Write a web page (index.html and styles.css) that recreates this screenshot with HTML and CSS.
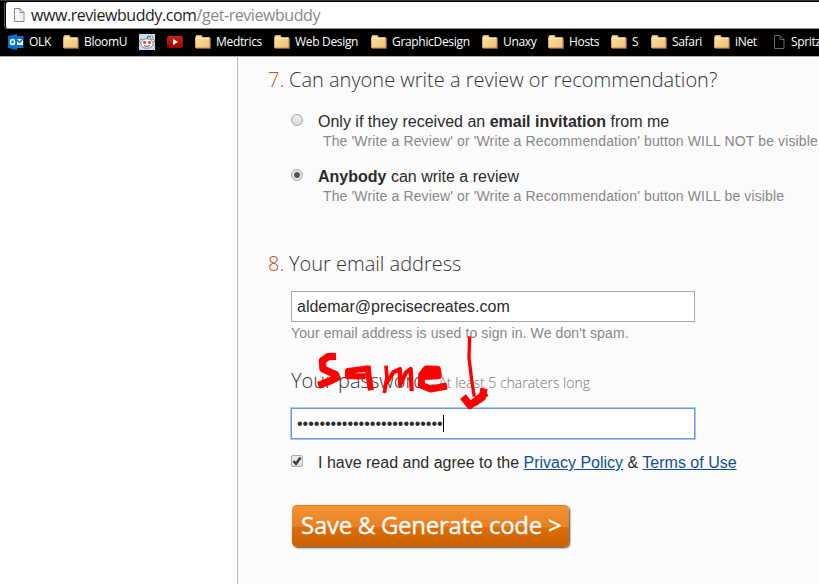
FILE: index.html
```html
<!DOCTYPE html>
<html lang="en">
<head>
<meta charset="utf-8">
<title>Get ReviewBuddy</title>
<link rel="stylesheet" href="styles.css">
</head>
<body>
<svg class="defs" width="0" height="0" aria-hidden="true">
  <defs>
    <linearGradient id="fold" x1="0" y1="0" x2="1" y2="1"><stop offset="0" stop-color="#ffe3a8"/><stop offset="1" stop-color="#f2bd72"/></linearGradient>
    <linearGradient id="tube" x1="0" y1="0" x2="0" y2="1"><stop offset="0" stop-color="#c9211e"/><stop offset="1" stop-color="#990000"/></linearGradient>
    <symbol id="folder" viewBox="0 0 16 16"><path d="M1 14.500h14.500V4" fill="none" stroke="#735b3d"/><path d="M.5 3.500 1.500 1.500h5l1 2h7v10H.5z" fill="url(#fold)" stroke="#d6aa6b"/><path d="M1.500 4.500h12.500" stroke="#fff0c8"/></symbol>
    <symbol id="page" viewBox="0 0 12 16"><path d="M1.500 1.500h5.500l4 4v9h-9.500zM7 1.500v4h4" stroke-width="1"/></symbol>
  </defs>
</svg>
<header class="browser">
  <div class="address">
    <svg class="page-icon" width="12" height="16"><use href="#page"/></svg>
    <span class="url">www.reviewbuddy.com<span class="path">/get-reviewbuddy</span></span>
  </div>
  <nav class="bookmarks">
    <a><svg width="16" height="16"><path d="M6 2h9.500v12H6z" fill="#0873c4"/><path d="M8 5h7v6H8z" fill="#fff"/><path d="m8 5 3.500 3.500L15 5" fill="none" stroke="#0873c4" stroke-width="1.500"/><path d="M0 2 9 0v16L0 14z" fill="#0873c4"/><ellipse cx="4.500" cy="8" rx="2" ry="2.500" fill="none" stroke="#fff" stroke-width="1.500"/></svg><span>OLK</span></a>
    <a><svg width="16" height="16"><use href="#folder"/></svg><span>BloomU</span></a>
    <a><svg width="16" height="16"><path d="M0 0h16v16H0z" fill="#c5ddf7"/><path d="m8 5 1-3 3 1" fill="none" stroke="#555"/><circle cx="12.500" cy="3" r="1.300" fill="#fff" stroke="#666" stroke-width=".7"/><circle cx="2.300" cy="7" r="1.700" fill="#fff" stroke="#666" stroke-width=".7"/><circle cx="13.700" cy="7" r="1.700" fill="#fff" stroke="#666" stroke-width=".7"/><ellipse cx="8" cy="9.500" rx="6.200" ry="4.700" fill="#fff" stroke="#666" stroke-width=".8"/><circle cx="5.500" cy="8.500" r="1.400" fill="#f03010"/><circle cx="10.500" cy="8.500" r="1.400" fill="#f03010"/><path d="M5 11.500q3 2 6 0" fill="none" stroke="#555"/></svg></a>
    <a><svg width="16" height="16"><rect y="2" width="16" height="12" rx="2" fill="url(#tube)"/><path d="m6 5 5 3-5 3z" fill="#fff"/></svg></a>
    <a><svg width="16" height="16"><use href="#folder"/></svg><span>Medtrics</span></a>
    <a><svg width="16" height="16"><use href="#folder"/></svg><span>Web Design</span></a>
    <a><svg width="16" height="16"><use href="#folder"/></svg><span>GraphicDesign</span></a>
    <a><svg width="16" height="16"><use href="#folder"/></svg><span>Unaxy</span></a>
    <a><svg width="16" height="16"><use href="#folder"/></svg><span>Hosts</span></a>
    <a><svg width="16" height="16"><use href="#folder"/></svg><span>S</span></a>
    <a><svg width="16" height="16"><use href="#folder"/></svg><span>Safari</span></a>
    <a><svg width="16" height="16"><use href="#folder"/></svg><span>iNet</span></a>
    <a><svg class="dark-page" width="12" height="16"><use href="#page"/></svg><span>Spritz</span></a>
  </nav>
</header>
<main class="content">
  <section class="access">
    <h2><span class="num">7.</span><span>Can anyone write a review or recommendation?</span></h2>
    <div class="option">
      <i class="radio"></i>
      <div><p class="choice">Only if they received an <b>email invitation</b> from me</p><p class="hint">The 'Write a Review' or 'Write a Recommendation' button WILL NOT be visible</p></div>
    </div>
    <div class="option">
      <i class="radio on"></i>
      <div><p class="choice"><b>Anybody</b> can write a review</p><p class="hint">The 'Write a Review' or 'Write a Recommendation' button WILL be visible</p></div>
    </div>
  </section>
  <section class="account">
    <h2><span class="num">8.</span><span>Your email address</span></h2>
    <div class="fields">
      <div class="field">aldemar@precisecreates.com</div>
      <p class="hint note">Your email address is used to sign in. We don't spam.</p>
      <p class="password-label">Your password <small>- At least 5 charaters long</small></p>
      <div class="field focused"><span>••••••••••••••••••••••••••</span><i class="caret"></i></div>
      <div class="agree">
        <i class="check"><svg width="12" height="12"><path d="m2.500 6 2.500 2.800L9.500 2.500" fill="none" stroke="#3b3b3b" stroke-width="2.400"/></svg></i>
        <span>I have read and agree to the <a>Privacy Policy</a> &amp; <a>Terms of Use</a></span>
      </div>
      <button class="save"><span>Save &amp; Generate code &gt;</span></button>
    </div>
  </section>
</main>
<svg class="scribble" width="220" height="120" viewBox="0 0 660 360" aria-hidden="true">
  <g fill="none" stroke="red" stroke-width="22" stroke-linejoin="round">
    <path d="M168 94 144 95 127 107 129 132 167 149 170 158 150 168 115 181"/>
    <path d="M266 130 204 138 204 154 256 154M263 122 266 155 273 196" stroke-width="18"/>
    <path d="M318 122 321 159 313 204" stroke-width="11"/>
    <path d="M318 176 340 142 360 133 360 180 378 143 392 132 395 198" stroke-width="13"/>
    <path d="M422 155 475 152 472 133 439 132 425 150 424 181 452 192 501 183" stroke-width="21"/>
    <path d="M569 34 567 98 575 165 583 215" stroke-width="10"/>
    <path d="M549 215 570 241 619 203" stroke-width="22"/>
    <path d="M612 190 607 217 579 236" stroke-width="22"/>
  </g>
</svg>
</body>
</html>
```
FILE: styles.css
```css
* { box-sizing: border-box; }
body { margin: 0; width: 819px; height: 584px; overflow: hidden; position: relative; background: #fff; color: #2b2b2b; font-family: "Liberation Sans", Arial, sans-serif; }
p, h2 { margin: 0; white-space: nowrap; }
.defs { position: absolute; }

.browser { height: 57px; background: #000; border-top: 1px solid #333; border-bottom: 1px solid #aaa; overflow: hidden; }
.address { height: 28px; margin: 0 0 0 5px; padding: 0 0 1px 7px; display: flex; align-items: center; background: #fff; border: 1px solid #000; border-bottom: 1px solid #888; border-right: 0; border-radius: 3px 0 0 3px; box-shadow: -1px 0 #555; }
.page-icon { margin-right: 6px; fill: #f5f5f5; stroke: #888; }
.url { font: 16px/24px "Open Sans", sans-serif; letter-spacing: -.44px; color: #222; white-space: nowrap; }
.path { color: #888; }
.bookmarks { height: 26px; padding-left: 8px; display: grid; grid-template-columns: 55px 76px 28px 28px 79px 97px 111px 66px 63px 40px 63px 59px 50px; align-items: center; color: #fff; font: 12px/16px "Open Sans", sans-serif; letter-spacing: -.32px; }
.bookmarks a { display: flex; gap: 5px; white-space: nowrap; }
.bookmarks svg { flex: none; }
.dark-page { fill: none; stroke: #666; margin-right: 1px; }

.content { margin-left: 237px; height: 527px; padding: 10px 0 0 30px; background: #fbfbfb; border-left: 1px solid #b5b5b5; }
h2 { display: flex; font: 300 20px/26px "Open Sans", sans-serif; color: #333; }
.num { width: 21px; flex: none; color: #b9571c; }
.access { height: 184px; }
.option { display: flex; height: 55px; padding-left: 23px; }
.access h2 { margin-bottom: 18px; }
.radio { flex: none; width: 12px; height: 12px; margin: 3px 15px 0 0; border: 1px solid #a5a5a5; border-radius: 50%; background: linear-gradient(#ededed, #dcdcdc); }
.radio.on { background: radial-gradient(circle, #555 0 2.5px, #e8e8e8 3.5px); }
.choice { padding-top: 1px; font-size: 16px; line-height: 20px; }
.hint { padding-left: 5px; font-size: 14px; line-height: 18px; letter-spacing: .135px; color: #888; }
.fields { padding: 14px 0 0 23px; }
.field { width: 404px; height: 31px; padding-left: 5px; display: flex; align-items: center; background: #fff; border: 1px solid #aaa; font-size: 16px; }
.note { padding: 0; margin-top: 2px; letter-spacing: .11px; }
.password-label { margin: 26px 0 12px; font: 300 20px/26px "Open Sans", sans-serif; color: #333; }
.password-label small { font-size: 14px; color: #777; }
.focused { border-color: #6f96dc; box-shadow: 0 0 0 1px #a5c7fe; }
.caret { width: 1px; height: 17px; background: #000; }
.agree { display: flex; height: 20px; margin-top: 14px; font-size: 16px; line-height: 20px; white-space: nowrap; }
.check { flex: none; width: 12px; height: 12px; margin: 2px 15px 0 0; border: 1px solid #aaa; border-radius: 2px; background: linear-gradient(#eee, #ddd); }
.check svg { display: block; margin: -1px; }
.agree a { color: #11508e; text-decoration: underline; }
.save { display: block; width: 277px; height: 42px; margin: 32px 0 0 1px; padding: 0 0 3px 9px; border: 0; border-top: 1px solid #d7812c; border-radius: 5px; background: linear-gradient(#f79233 0, #e78125 50%, #dc6f0c 51%, #cc6100 100%); box-shadow: 1px 1px 2px #444; color: #fff; text-align: left; font: 24px/38px "Open Sans", sans-serif; letter-spacing: -.28px; -webkit-text-stroke: .3px #fff; white-space: nowrap; }
.scribble { position: absolute; left: 280px; top: 325px; }
```
